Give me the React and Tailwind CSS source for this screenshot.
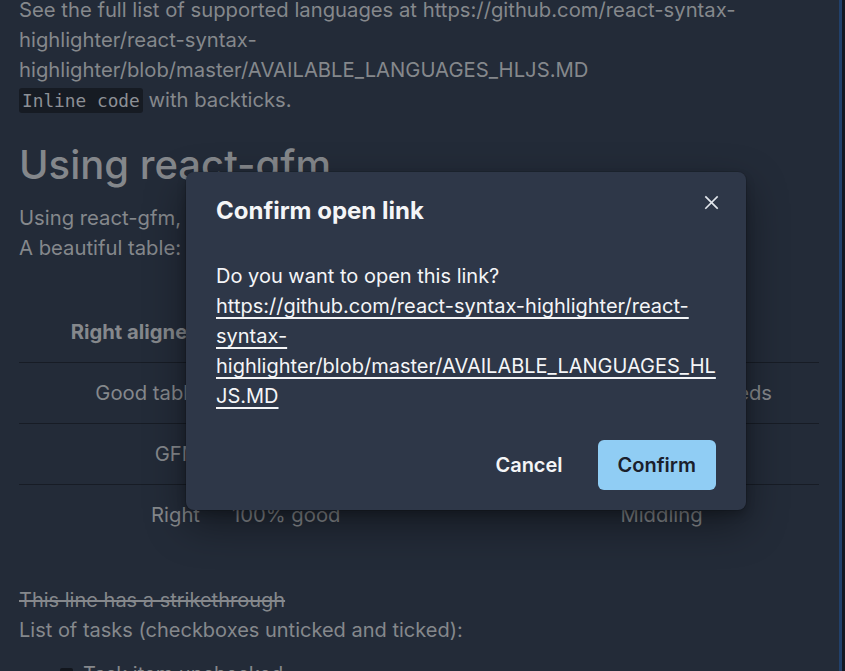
import React from "react";

const rows = [
  ["Good table", "Readable and tidy", "Satisfies all your needs"],
  ["GFM", "Supported", "Yes"],
  ["Right", "100% good", "Middling"],
];

const ConfirmModal = () => (
  <div className="absolute inset-0">
    <div className="relative ml-[186px] mt-[172px] w-[560px] rounded-[8px] bg-[#2e3748] text-[#f4f5f7] shadow-[0_0_0_1px_rgba(0,0,0,0.1),0_5px_10px_rgba(0,0,0,0.2),0_15px_40px_rgba(0,0,0,0.4)]">
      <button className="absolute right-[15px] top-[10px] flex h-10 w-10 items-center justify-center rounded-md text-[#e2e6ec]">
        <svg width="15" height="15" viewBox="0 0 24 24" fill="none" stroke="currentColor" strokeWidth="2.6" strokeLinecap="square">
          <path d="M3 3l18 18M21 3L3 21" />
        </svg>
      </button>
      <div className="px-[30px] pb-[22px] pt-[21px] text-[24px] font-bold leading-9">Confirm open link</div>
      <div className="px-[30px] py-[10px] text-[20px] leading-[30px]">
        <p>Do you want to open this link?</p>
        <a className="block break-words underline underline-offset-[4px]" href="#">
          https://github.com/react-syntax-highlighter/react-syntax-highlighter/blob/master/AVAILABLE_LANGUAGES_HLJS.MD
        </a>
      </div>
      <div className="flex justify-end gap-[15px] px-[30px] pb-[20px] pt-[19px]">
        <button className="h-[50px] rounded-md px-5 text-[20px] font-semibold text-[#f4f5f7]">Cancel</button>
        <button className="h-[50px] rounded-[6px] bg-[#90cdf4] px-5 text-[20px] font-semibold text-[#1a202c]">Confirm</button>
      </div>
    </div>
  </div>
);

export default function App() {
  return (
    <div className="relative h-[671px] w-full overflow-hidden bg-[#232b38] font-['Inter','Liberation_Sans',sans-serif]">
      <div className="flex h-full">
        <main className="mt-[-5px] w-[839px] px-[19px] text-[20.25px] leading-[30px] text-[#85888c]">
          <p className="w-[800px] break-words">
            See the full list of supported languages at https://github.com/react-syntax-highlighter/react-syntax-highlighter/blob/master/AVAILABLE_LANGUAGES_HLJS.MD
            <br />
            <code className="rounded-[3px] bg-[#161b23] px-[3px] py-[2px] font-['DejaVu_Sans_Mono',monospace] text-[17.8px] text-[#8d9096]">Inline code</code> with backticks.
          </p>
          <h2 className="mt-[26px] text-[40px] font-medium leading-[45px] text-[#84878b]">Using react-gfm</h2>
          <p className="mt-[16px]">
            Using react-gfm, we can use GitHub flavored markdown.
            <br />
            A beautiful table:
          </p>
          <table className="mt-[39px] w-[800px] table-fixed border-collapse">
            <thead>
              <tr className="border-b border-[#171c25]">
                <th className="w-[197px] py-[15px] pr-4 text-right font-bold">Right aligned</th>
                <th className="w-[288px] py-[15px] pl-4 text-left font-bold">Left aligned</th>
                <th className="py-[15px] text-center font-bold">Center aligned</th>
              </tr>
            </thead>
            <tbody>
              {rows.map((r, i) => (
                <tr key={i} className={i < rows.length - 1 ? "border-b border-[#171c25]" : ""}>
                  <td className="py-[15px] pr-4 text-right">{r[0]}</td>
                  <td className="py-[15px] pl-4 text-left">{r[1]}</td>
                  <td className="py-[15px] text-center">{r[2]}</td>
                </tr>
              ))}
            </tbody>
          </table>
          <div className="mt-[40px] text-[20px]">
            <p className="line-through">This line has a strikethrough</p>
            <p>List of tasks (checkboxes unticked and ticked):</p>
            <ul className="mt-[14px] pl-[41px]">
              <li className="flex items-center gap-[10px]">
                <span className="h-[13px] w-[13px] rounded-[2px] bg-[#12161d]" />
                Task item unchecked
              </li>
              <li className="flex items-center gap-[10px]">
                <span className="h-[13px] w-[13px] rounded-[2px] bg-[#3a6ea5]" />
                Task item checked
              </li>
            </ul>
          </div>
        </main>
        <div className="w-[3px] bg-[#21406a]" />
        <div className="flex-1 bg-[#131923]" />
      </div>
      <ConfirmModal />
    </div>
  );
}
